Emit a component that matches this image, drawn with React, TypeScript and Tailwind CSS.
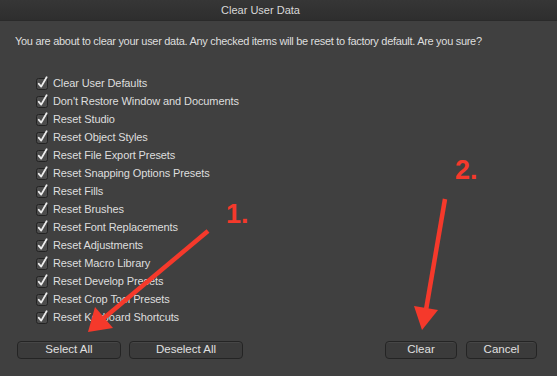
import React from "react";

const items = [
  "Clear User Defaults",
  "Don't Restore Window and Documents",
  "Reset Studio",
  "Reset Object Styles",
  "Reset File Export Presets",
  "Reset Snapping Options Presets",
  "Reset Fills",
  "Reset Brushes",
  "Reset Font Replacements",
  "Reset Adjustments",
  "Reset Macro Library",
  "Reset Develop Presets",
  "Reset Crop Tool Presets",
  "Reset Keyboard Shortcuts",
];

function CheckBox() {
  return (
    <svg width="14" height="14" viewBox="0 0 14 14" className="shrink-0">
      <rect x="0.5" y="2.5" width="11" height="11" rx="2" fill="#4c4c4c" stroke="#232323" />
      <path d="M2.8 7.8 L5.2 10.6 L10.6 1.2" fill="none" stroke="#ececec" strokeWidth="1.8" strokeLinecap="round" strokeLinejoin="round" />
    </svg>
  );
}

function Btn({ label, w }: { label: string; w: string }) {
  return (
    <div
      className={`${w} h-[18px] flex items-center justify-center rounded-[4px] border border-[#242424] bg-[#3b3b3b] text-[11.5px] text-[#e0e0e0] shadow-[inset_0_1px_0_rgba(255,255,255,0.06)]`}
    >
      {label}
    </div>
  );
}

export default function App() {
  return (
    <div
      className="relative w-[557px] h-[376px] overflow-hidden bg-[#404040] text-[#dedede]"
      style={{ fontFamily: '"Liberation Sans", Arial, sans-serif' }}
    >
      <div className="h-[21px] flex items-center justify-center pr-[36px] bg-gradient-to-b from-[#363636] to-[#2e2e2e] border-b border-[#2a2a2a] text-[11px] text-[#d8d8d8]">
        Clear User Data
      </div>
      <div className="mt-[13px] px-[15px] h-[14px] leading-[14px] text-[11px] tracking-[-0.3px] whitespace-nowrap">
        You are about to clear your user data. Any checked items will be reset to factory default. Are you sure?
      </div>
      <div className="mt-[26px] pl-[36px] flex flex-col">
        {items.map((t) => (
          <div key={t} className="h-[18px] flex items-center gap-[3px] text-[11px] tracking-[-0.1px]">
            <CheckBox />
            <span className="leading-[14px]">{t}</span>
          </div>
        ))}
      </div>
      <div className="mt-[15px] flex items-center pl-[17px] pr-[20px]">
        <div className="flex gap-[8px]">
          <Btn label="Select All" w="w-[104px]" />
          <Btn label="Deselect All" w="w-[114px]" />
        </div>
        <div className="ml-auto flex gap-[9px]">
          <Btn label="Clear" w="w-[72px]" />
          <Btn label="Cancel" w="w-[71px]" />
        </div>
      </div>

      <svg className="absolute inset-0 pointer-events-none" width="557" height="376" viewBox="0 0 557 376">
        <line x1="208" y1="231" x2="104" y2="318" stroke="#f5392b" strokeWidth="4.5" strokeLinecap="butt" />
        <polygon points="88,332 95,307 113,328" fill="#f5392b" />
        <line x1="445" y1="199" x2="426" y2="310" stroke="#f5392b" strokeWidth="4.5" />
        <polygon points="422,330 414,306 438,310" fill="#f5392b" />
      </svg>
      <div className="absolute left-[226px] top-[201px] text-[27px] font-bold leading-none text-[#f5392b]">1.</div>
      <div className="absolute left-[455px] top-[157px] text-[27px] font-bold leading-none text-[#f5392b]">2.</div>
    </div>
  );
}
